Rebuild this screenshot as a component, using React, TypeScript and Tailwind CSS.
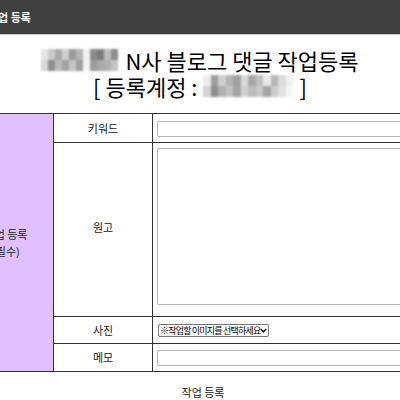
import React from "react";

const font = { fontFamily: '"Noto Sans CJK KR", "Noto Sans", sans-serif' };

// 모자이크 처리된 영역 (흐림 블록)
const mosaicTitle = [
  "bg-[#e4e4e4]", "bg-[#c9c9c9]", "bg-[#a9a9a9]", "bg-[#cfcfcf]", "bg-[#9a9a9a]", "bg-[#b5b5b5]",
  "bg-[#f2f2f2]", "bg-[#8a8a8a]", "bg-[#7c7c7c]", "bg-[#bdbdbd]", "bg-[#8d8d8d]",
  "bg-[#d8d8d8]", "bg-[#8f8f8f]", "bg-[#b9b9b9]", "bg-[#a3a3a3]", "bg-[#c6c6c6]", "bg-[#9e9e9e]",
  "bg-[#f5f5f5]", "bg-[#9b9b9b]", "bg-[#a8a8a8]", "bg-[#b0b0b0]", "bg-[#c4c4c4]",
];

const mosaicAccount = [
  "bg-[#ececec]", "bg-[#9f9f9f]", "bg-[#cfcfcf]", "bg-[#b4b4b4]", "bg-[#a0a0a0]", "bg-[#dadada]",
  "bg-[#a7a7a7]", "bg-[#c0c0c0]", "bg-[#e9e9e9]", "bg-[#b7b7b7]", "bg-[#dcdcdc]", "bg-[#f0f0f0]",
  "bg-[#d4d4d4]", "bg-[#8e8e8e]", "bg-[#b2b2b2]", "bg-[#c1c1c1]", "bg-[#a5a5a5]", "bg-[#d2d2d2]",
  "bg-[#bcbcbc]", "bg-[#c9c9c9]", "bg-[#a4a4a4]", "bg-[#cbcbcb]", "bg-[#e1e1e1]", "bg-[#f4f4f4]",
];

function Mosaic({ cells, cols }: { cells: string[]; cols: 11 | 12 }) {
  const grid = cols === 11 ? "grid-cols-[repeat(11,7px)]" : "grid-cols-[repeat(12,7.5px)]";
  return (
    <span className={`inline-grid ${grid} grid-rows-[11px_11px] align-middle blur-[0.8px]`}>
      {cells.map((c, i) => (
        <span key={i} className={c} />
      ))}
    </span>
  );
}

export default function App() {
  return (
    <div className="w-[400px] h-[400px] overflow-hidden bg-white text-[#222]" style={font}>
      {/* 상단 바 */}
      <div className="h-[35px] bg-[#404040] border-b border-[#c8c8c8] flex items-center">
        <span className="-ml-[12px] text-[11px] font-bold text-white leading-none whitespace-nowrap">작업 등록</span>
      </div>

      {/* 제목 */}
      <div className="pt-[12px] text-center text-black text-[22px] leading-[26px]">
        <div className="flex justify-center items-center gap-[7px]">
          <Mosaic cells={mosaicTitle} cols={11} />
          <span>N사 블로그 댓글 작업등록</span>
        </div>
        <div className="flex justify-center items-center gap-[6px]">
          <span>[ 등록계정 :</span>
          <Mosaic cells={mosaicAccount} cols={12} />
          <span>]</span>
        </div>
      </div>

      {/* 입력 테이블 */}
      <div className="mt-[14px] overflow-hidden">
        <div className="-ml-[46px] w-[560px] grid grid-cols-[100px_99px_1fr] grid-rows-[29px_174px_27px_27px] border-t border-b border-[#333] text-[11px] text-[#222]">
          <div className="row-span-4 bg-[#e1c0ff] border-r border-[#333] flex flex-col items-center justify-center gap-[2px] leading-[15px] pl-[5px] whitespace-nowrap">
            <span>작업 등록</span>
            <span>(필수)</span>
          </div>

          <div className="border-r border-b border-[#333] flex items-center justify-center">키워드</div>
          <div className="border-b border-[#333] pl-[4px] pt-[7px]">
            <input className="block w-[400px] h-[16px] border border-[#b4b4b4] rounded-[2px] bg-white" />
          </div>

          <div className="border-r border-b border-[#333] flex items-center justify-center pb-[5px]">원고</div>
          <div className="border-b border-[#333] pl-[4px] pt-[5px]">
            <textarea className="block w-[400px] h-[157px] border border-[#b4b4b4] rounded-[2px] bg-white resize-none" />
          </div>

          <div className="border-r border-b border-[#333] flex items-center justify-center">사진</div>
          <div className="border-b border-[#333] pl-[5px] flex items-center">
            <div className="h-[13px] w-[111px] border border-[#777] rounded-[2px] bg-white flex items-center justify-between pl-[1px] pr-[1px] text-[9px] text-black leading-none whitespace-nowrap overflow-hidden">
              <span className="tracking-[-0.8px]">※작업할 이미지를 선택하세요</span>
              <svg width="7" height="5" viewBox="0 0 7 5" fill="none" stroke="#000" strokeWidth="1.3" className="shrink-0">
                <path d="M0.7 1 L3.5 3.8 L6.3 1" />
              </svg>
            </div>
          </div>

          <div className="border-r border-[#333] flex items-center justify-center">메모</div>
          <div className="pl-[4px] pt-[6px]">
            <input className="block w-[400px] h-[16px] border border-[#b4b4b4] rounded-[2px] bg-white" />
          </div>
        </div>
      </div>

      {/* 등록 버튼 */}
      <div className="mt-[12px] flex justify-center pl-[6px]">
        <span className="text-[11px] text-[#222] leading-[16px]">작업 등록</span>
      </div>
    </div>
  );
}
